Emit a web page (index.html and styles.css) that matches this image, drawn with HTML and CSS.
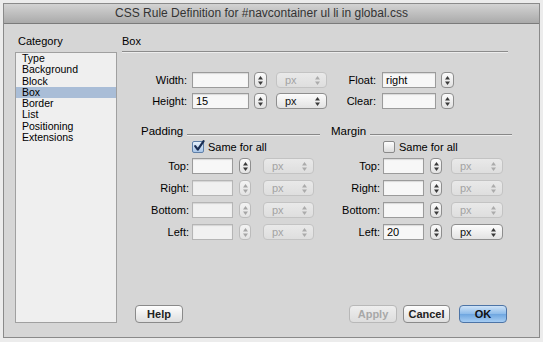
FILE: index.html
```html
<!DOCTYPE html>
<html>
<head>
<meta charset="utf-8">
<link rel="stylesheet" href="styles.css">
</head>
<body>
<div class="window">
  <div class="titlebar">CSS Rule Definition for #navcontainer ul li in global.css</div>
  <div class="content">
    <div class="sidebar">
      <div class="cat-label">Category</div>
      <ul class="cat-list">
        <li>Type</li>
        <li>Background</li>
        <li>Block</li>
        <li class="active">Box</li>
        <li>Border</li>
        <li>List</li>
        <li>Positioning</li>
        <li>Extensions</li>
      </ul>
    </div>
    <div class="main">
      <div class="panel-head">Box</div>
      <div class="box-rows">
        <div class="row">
          <span class="lbl lbl-w">Width:</span>
          <span class="field in-w"></span>
          <span class="step st-w"><svg width="5" height="9" viewBox="0 0 5 9"><polygon points="0,3.5 2.5,0 5,3.5"/><polygon points="0,5.5 2.5,9 5,5.5"/></svg></span>
          <span class="sel dis sel-w">px<svg width="5" height="9" viewBox="0 0 5 9"><polygon points="0,3.5 2.5,0 5,3.5"/><polygon points="0,5.5 2.5,9 5,5.5"/></svg></span>
          <span class="lbl lbl-f">Float:</span>
          <span class="field in-f">right</span>
          <span class="step st-f"><svg width="5" height="9" viewBox="0 0 5 9"><polygon points="0,3.5 2.5,0 5,3.5"/><polygon points="0,5.5 2.5,9 5,5.5"/></svg></span>
        </div>
        <div class="row">
          <span class="lbl lbl-w">Height:</span>
          <span class="field in-w">15</span>
          <span class="step st-w"><svg width="5" height="9" viewBox="0 0 5 9"><polygon points="0,3.5 2.5,0 5,3.5"/><polygon points="0,5.5 2.5,9 5,5.5"/></svg></span>
          <span class="sel sel-w">px<svg width="5" height="9" viewBox="0 0 5 9"><polygon points="0,3.5 2.5,0 5,3.5"/><polygon points="0,5.5 2.5,9 5,5.5"/></svg></span>
          <span class="lbl lbl-f">Clear:</span>
          <span class="field in-f"></span>
          <span class="step st-f"><svg width="5" height="9" viewBox="0 0 5 9"><polygon points="0,3.5 2.5,0 5,3.5"/><polygon points="0,5.5 2.5,9 5,5.5"/></svg></span>
        </div>
      </div>
      <div class="sections">
        <div class="section sec-pad">
          <div class="sec-head"><span>Padding</span><span class="rule"></span></div>
          <div class="same"><span class="check on"><svg width="12" height="12" viewBox="0 0 12 12"><path d="M2.2 6.2 L4.8 9.6 L10.6 1.2" fill="none" stroke="#1b2d52" stroke-width="2.2" stroke-linecap="round" stroke-linejoin="round"/></svg></span>Same for all</div>
          <div class="srow"><span class="lbl sl">Top:</span><span class="field sf"></span><span class="step ss"><svg width="5" height="9" viewBox="0 0 5 9"><polygon points="0,3.5 2.5,0 5,3.5"/><polygon points="0,5.5 2.5,9 5,5.5"/></svg></span><span class="sel dis sp">px<svg width="5" height="9" viewBox="0 0 5 9"><polygon points="0,3.5 2.5,0 5,3.5"/><polygon points="0,5.5 2.5,9 5,5.5"/></svg></span></div>
          <div class="srow"><span class="lbl sl">Right:</span><span class="field dis sf"></span><span class="step dis ss"><svg width="5" height="9" viewBox="0 0 5 9"><polygon points="0,3.5 2.5,0 5,3.5"/><polygon points="0,5.5 2.5,9 5,5.5"/></svg></span><span class="sel dis sp">px<svg width="5" height="9" viewBox="0 0 5 9"><polygon points="0,3.5 2.5,0 5,3.5"/><polygon points="0,5.5 2.5,9 5,5.5"/></svg></span></div>
          <div class="srow"><span class="lbl sl">Bottom:</span><span class="field dis sf"></span><span class="step dis ss"><svg width="5" height="9" viewBox="0 0 5 9"><polygon points="0,3.5 2.5,0 5,3.5"/><polygon points="0,5.5 2.5,9 5,5.5"/></svg></span><span class="sel dis sp">px<svg width="5" height="9" viewBox="0 0 5 9"><polygon points="0,3.5 2.5,0 5,3.5"/><polygon points="0,5.5 2.5,9 5,5.5"/></svg></span></div>
          <div class="srow"><span class="lbl sl">Left:</span><span class="field dis sf"></span><span class="step dis ss"><svg width="5" height="9" viewBox="0 0 5 9"><polygon points="0,3.5 2.5,0 5,3.5"/><polygon points="0,5.5 2.5,9 5,5.5"/></svg></span><span class="sel dis sp">px<svg width="5" height="9" viewBox="0 0 5 9"><polygon points="0,3.5 2.5,0 5,3.5"/><polygon points="0,5.5 2.5,9 5,5.5"/></svg></span></div>
        </div>
        <div class="section sec-mar">
          <div class="sec-head"><span>Margin</span><span class="rule"></span></div>
          <div class="same"><span class="check"></span>Same for all</div>
          <div class="srow"><span class="lbl sl">Top:</span><span class="field sf"></span><span class="step ss"><svg width="5" height="9" viewBox="0 0 5 9"><polygon points="0,3.5 2.5,0 5,3.5"/><polygon points="0,5.5 2.5,9 5,5.5"/></svg></span><span class="sel dis sp">px<svg width="5" height="9" viewBox="0 0 5 9"><polygon points="0,3.5 2.5,0 5,3.5"/><polygon points="0,5.5 2.5,9 5,5.5"/></svg></span></div>
          <div class="srow"><span class="lbl sl">Right:</span><span class="field sf"></span><span class="step ss"><svg width="5" height="9" viewBox="0 0 5 9"><polygon points="0,3.5 2.5,0 5,3.5"/><polygon points="0,5.5 2.5,9 5,5.5"/></svg></span><span class="sel dis sp">px<svg width="5" height="9" viewBox="0 0 5 9"><polygon points="0,3.5 2.5,0 5,3.5"/><polygon points="0,5.5 2.5,9 5,5.5"/></svg></span></div>
          <div class="srow"><span class="lbl sl">Bottom:</span><span class="field sf"></span><span class="step ss"><svg width="5" height="9" viewBox="0 0 5 9"><polygon points="0,3.5 2.5,0 5,3.5"/><polygon points="0,5.5 2.5,9 5,5.5"/></svg></span><span class="sel dis sp">px<svg width="5" height="9" viewBox="0 0 5 9"><polygon points="0,3.5 2.5,0 5,3.5"/><polygon points="0,5.5 2.5,9 5,5.5"/></svg></span></div>
          <div class="srow"><span class="lbl sl">Left:</span><span class="field sf">20</span><span class="step ss"><svg width="5" height="9" viewBox="0 0 5 9"><polygon points="0,3.5 2.5,0 5,3.5"/><polygon points="0,5.5 2.5,9 5,5.5"/></svg></span><span class="sel sp">px<svg width="5" height="9" viewBox="0 0 5 9"><polygon points="0,3.5 2.5,0 5,3.5"/><polygon points="0,5.5 2.5,9 5,5.5"/></svg></span></div>
        </div>
      </div>
      <div class="footer">
        <button class="btn help">Help</button>
        <span class="spacer"></span>
        <button class="btn dis apply">Apply</button>
        <button class="btn cancel">Cancel</button>
        <button class="btn ok">OK</button>
      </div>
    </div>
  </div>
</div>
</body>
</html>
```

FILE: styles.css
```css
html, body {
  margin: 0;
}
body {
  padding: 3px;
  background: #ececec;
  font-family: "Liberation Sans", Arial, sans-serif;
  font-size: 11px;
  color: #111;
}
.window {
  width: 537px;
  height: 335px;
  box-sizing: border-box;
  border: 1px solid #8a8a8a;
  background: #d6d6d6;
  display: flex;
  flex-direction: column;
}
.titlebar {
  height: 19px;
  border-bottom: 1px solid #7b7b7b;
  background: linear-gradient(#d3d3d3, #aaaaaa);
  text-align: center;
  line-height: 19px;
  font-size: 12px;
  color: #333;
  padding-right: 20px;
}
.content {
  flex: 1;
  display: flex;
  padding: 10px 31px 14px 11px;
  min-height: 0;
}
.sidebar {
  width: 102px;
  flex-shrink: 0;
  display: flex;
  flex-direction: column;
  margin-right: 5px;
}
.cat-label {
  line-height: 14px;
  padding-left: 3px;
  margin-bottom: 4px;
  color: #000;
}
.cat-list {
  flex: 1;
  margin: 0;
  padding: 0;
  list-style: none;
  background: #efefef;
  border: 1px solid #a0a0a0;
  font-size: 10.5px;
  line-height: 11.3px;
  color: #000;
}
.cat-list li {
  padding-left: 6px;
}
.cat-list li.active {
  background: #a9bdd7;
}
.main {
  flex: 1;
  min-width: 0;
  display: flex;
  flex-direction: column;
}
.panel-head {
  line-height: 14px;
  padding-bottom: 3px;
  border-bottom: 1px solid #8c8c8c;
  box-shadow: 0 1px 0 #ededed;
  color: #000;
}
.box-rows {
  margin-top: 20px;
  display: flex;
  flex-direction: column;
  gap: 5px;
}
.row, .srow {
  display: flex;
  align-items: center;
  height: 16px;
}
.row > *, .srow > * {
  flex-shrink: 0;
}
.lbl {
  text-align: right;
  color: #000;
}
.lbl-w { width: 65px; margin-right: 5px; }
.in-w { width: 57px; }
.st-w { margin-left: 5px; }
.sel-w { width: 51px; margin-left: 9px; }
.lbl-f { width: 49px; margin-right: 6px; }
.in-f { width: 54px; }
.st-f { margin-left: 5px; }

.field {
  box-sizing: border-box;
  height: 16px;
  border: 1px solid #9b9b9b;
  background: #f7f7f7;
  box-shadow: inset 0 1px 1px rgba(0,0,0,0.12);
  line-height: 14px;
  padding-left: 3px;
  color: #000;
}
.field.dis {
  border-color: #b5b5b5;
  background: #f1f1f1;
}
.step {
  box-sizing: border-box;
  width: 13px;
  height: 16px;
  border: 1px solid #8e8e8e;
  border-radius: 4px;
  background: linear-gradient(#fbfbfb, #e2e2e2);
  display: flex;
  align-items: center;
  justify-content: center;
}
.step svg { fill: #3a3a3a; }
.step.dis {
  border-color: #bcbcbc;
  background: linear-gradient(#f3f3f3, #e3e3e3);
}
.step.dis svg { fill: #a5a5a5; }
.sel {
  box-sizing: border-box;
  height: 16px;
  border: 1px solid #8e8e8e;
  border-radius: 4px;
  background: linear-gradient(#fcfcfc, #e3e3e3);
  display: flex;
  align-items: center;
  justify-content: space-between;
  padding: 0 6px 0 8px;
  color: #111;
}
.sel svg { fill: #3a3a3a; }
.sel.dis {
  border-color: #c3c3c3;
  background: linear-gradient(#e9e9e9, #dedede);
  color: #a3a3a3;
}
.sel.dis svg { fill: #ababab; }

.sections {
  display: flex;
  margin-top: 15px;
  margin-left: 19px;
}
.section { flex-shrink: 0; }
.sec-pad { width: 179px; }
.sec-mar { width: 181px; margin-left: 11px; }
.sec-head {
  display: flex;
  align-items: center;
  line-height: 14px;
  font-size: 11.5px;
  color: #000;
}
.rule {
  flex: 1;
  height: 1px;
  background: #888;
  margin: 6px 0 0 4px;
  box-shadow: 0 1px 0 #ececec;
}
.same {
  display: flex;
  align-items: center;
  line-height: 14px;
  margin-top: 2px;
  margin-bottom: 4px;
  color: #000;
}
.sec-pad .same { padding-left: 51px; }
.sec-mar .same { padding-left: 52px; }
.check {
  box-sizing: border-box;
  width: 12px;
  height: 12px;
  border: 1px solid #8a8a8a;
  border-radius: 2px;
  background: linear-gradient(#fdfdfd, #dcdcdc);
  margin-right: 4px;
  position: relative;
}
.check.on {
  background: linear-gradient(#e6f0fb, #a9c6e8);
  border-color: #5f7fa8;
}
.check svg {
  position: absolute;
  left: 0;
  top: -2px;
  overflow: visible;
}
.srow { margin-bottom: 6px; }
.sl { width: 48px; margin-right: 3px; }
.sec-mar .sl { width: 49px; }
.sf { width: 41px; }
.ss { width: 12px; margin-left: 6px; }
.sp { width: 51px; margin-left: 12px; }
.sec-mar .sp { width: 52px; margin-left: 9px; }

.footer {
  margin-top: auto;
  display: flex;
  align-items: flex-end;
  padding-left: 13px;
  padding-right: 1px;
}
.spacer { flex: 1; }
.btn {
  box-sizing: border-box;
  height: 18px;
  width: 48px;
  padding: 0;
  border: 1px solid #8a8a8a;
  border-radius: 4px;
  background: linear-gradient(#fefefe, #dedede);
  font-family: "Liberation Sans", Arial, sans-serif;
  font-size: 11px;
  font-weight: bold;
  color: #222;
  line-height: 16px;
}
.btn.dis {
  border-color: #b8b8b8;
  background: linear-gradient(#eeeeee, #dddddd);
  color: #a8a8a8;
}
.cancel { width: 47px; margin-left: 6px; }
.ok {
  margin-left: 9px;
  border-color: #4d74a6;
  background: linear-gradient(#cfe3f7, #8cbbea 50%, #6ea6e0 51%, #a6cdf3);
  color: #111;
}
```
